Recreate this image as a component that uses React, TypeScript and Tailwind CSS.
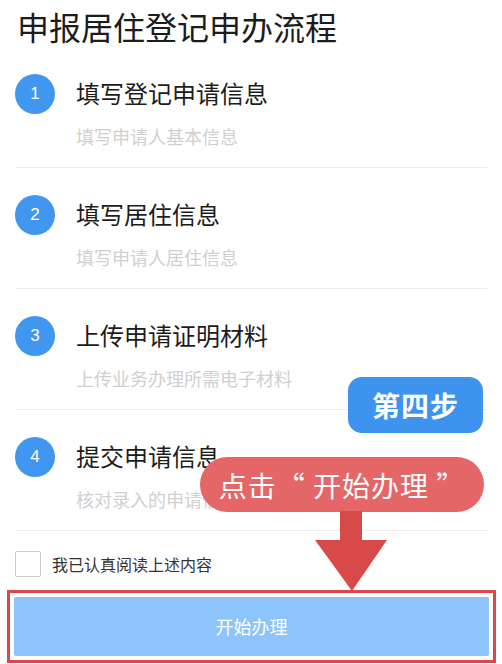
import React from 'react';

const steps = [
  { n: 1, title: '填写登记申请信息', desc: '填写申请人基本信息' },
  { n: 2, title: '填写居住信息', desc: '填写申请人居住信息' },
  { n: 3, title: '上传申请证明材料', desc: '上传业务办理所需电子材料' },
  { n: 4, title: '提交申请信息', desc: '核对录入的申请信息并提交' },
];

const font = { fontFamily: '"Noto Sans CJK SC", "Noto Sans", sans-serif' };

export default function App() {
  return (
    <div className="relative w-[502px] h-[664px] bg-white overflow-hidden" style={font}>
      {/* Title */}
      <h1 className="pl-[17px] pt-[6px] text-[32px] leading-[40px] text-[#1c1c1c] font-normal">
        申报居住登记申办流程
      </h1>

      {/* Steps */}
      <div className="px-[15px]">
        {steps.map((s, i) => (
          <div
            key={s.n}
            className={`${i === 0 ? 'pt-[28px]' : 'pt-[27px]'} pb-[19px] border-b border-[#ececec]`}
          >
            <div className="flex items-center h-[40px]">
              <div className="w-[40px] h-[40px] rounded-full bg-[#4196f0] flex items-center justify-center text-white text-[17px]" style={{ fontFamily: '"Liberation Sans", sans-serif' }}>
                {s.n}
              </div>
              <div className="ml-[21px] text-[24px] leading-[32px] text-[#1c1c1c] -mt-[3px]">{s.title}</div>
            </div>
            <div className="mt-[10px] ml-[61px] text-[18px] leading-[24px] text-[#d0d0d0]">{s.desc}</div>
          </div>
        ))}
      </div>

      {/* Agreement */}
      <div className="flex items-center px-[15px] mt-[20px]">
        <div className="w-[26px] h-[26px] border border-[#cccccc] rounded-[2px]" />
        <span className="ml-[11px] text-[16px] leading-[24px] text-[#333333]">我已认真阅读上述内容</span>
      </div>

      {/* Start button with annotation frame */}
      <div className="mt-[13px] ml-[7px] w-[489px] border-[3px] border-[#d9474a] p-[4px]">
        <div className="h-[59px] rounded-[2px] bg-[#8dc4fb] flex items-center justify-center text-white text-[18px]">
          开始办理
        </div>
      </div>

      {/* Annotation: step badge */}
      <div className="absolute left-[348px] top-[377px] w-[135px] h-[56px] rounded-[14px] bg-[#3d93ee] flex items-center justify-center text-white text-[28px] font-bold tracking-[1px]">
        第四步
      </div>

      {/* Annotation: red pill */}
      <div className="absolute left-[200px] top-[457px] w-[284px] h-[55px] rounded-full bg-[#e56666] flex items-center justify-center text-white text-[28px] tracking-[1px] whitespace-pre">
        点击“ 开始办理 ”
      </div>

      {/* Annotation: arrow */}
      <svg className="absolute left-[310px] top-[511px]" width="84" height="82" viewBox="0 0 84 82">
        <rect x="30" y="0" width="22" height="30" fill="#d84a4a" />
        <polygon points="5,29 77,29 42,80" fill="#d84a4a" />
      </svg>
    </div>
  );
}
